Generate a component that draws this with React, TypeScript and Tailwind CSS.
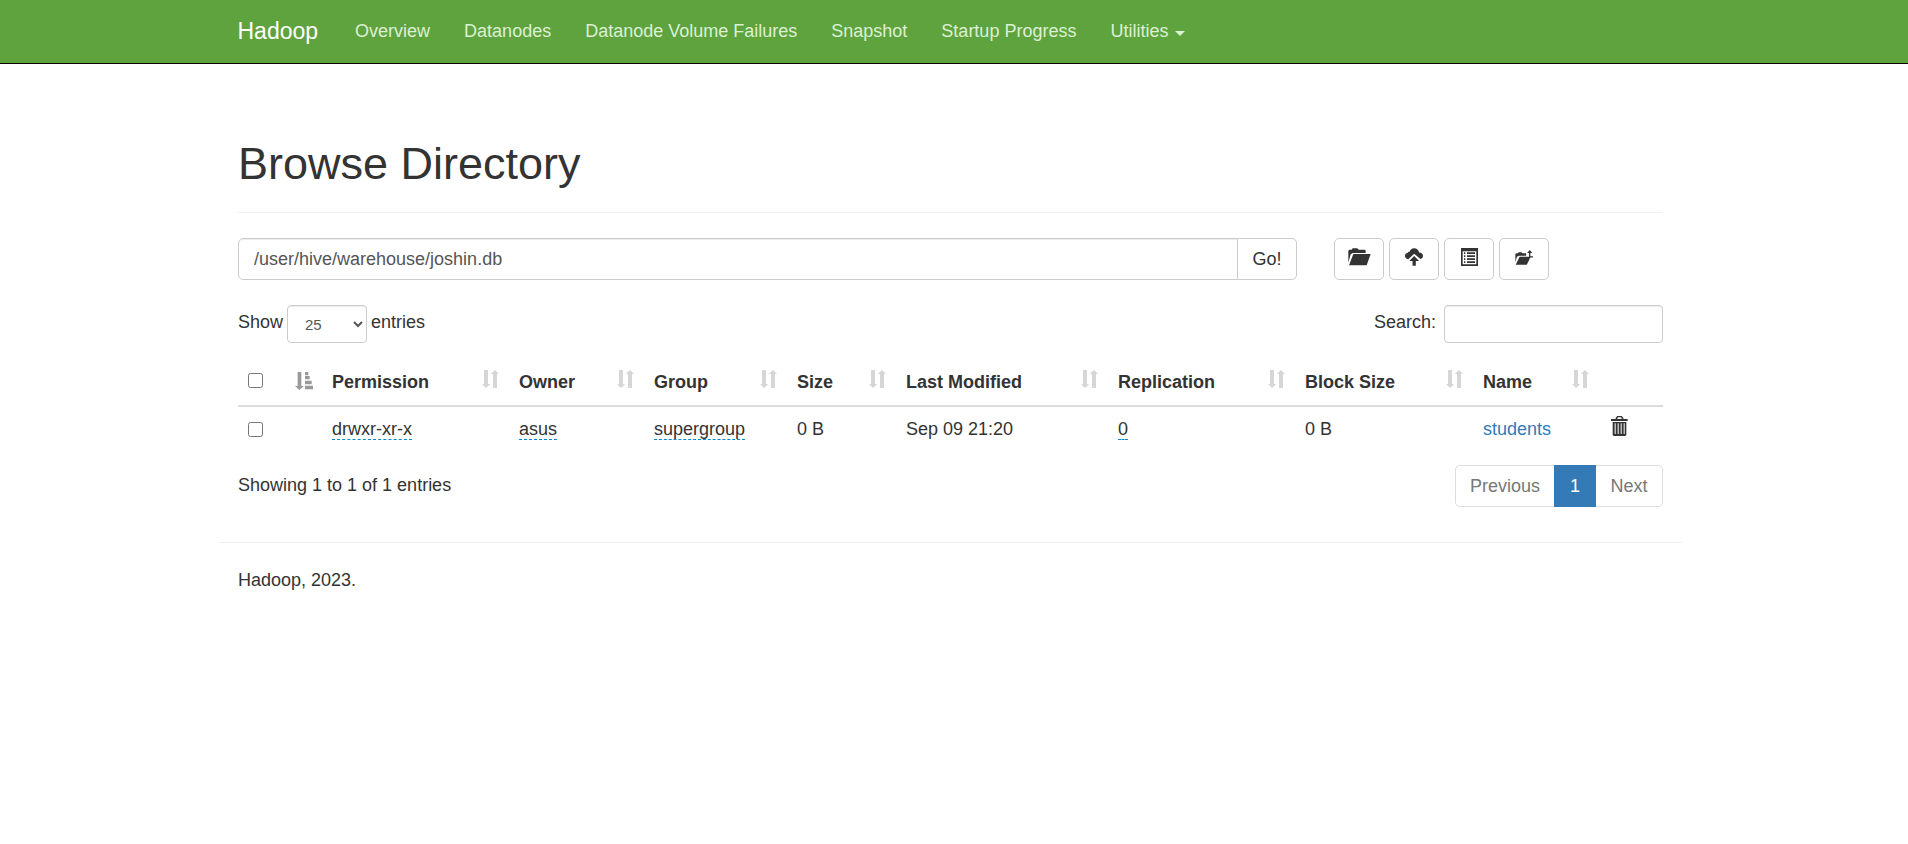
import React from "react";

const navItems = ["Overview", "Datanodes", "Datanode Volume Failures", "Snapshot", "Startup Progress"];

const columns = [
  { label: "Permission", width: "w-[187px]" },
  { label: "Owner", width: "w-[135px]" },
  { label: "Group", width: "w-[143px]" },
  { label: "Size", width: "w-[109px]" },
  { label: "Last Modified", width: "w-[212px]" },
  { label: "Replication", width: "w-[187px]" },
  { label: "Block Size", width: "w-[178px]" },
  { label: "Name", width: "w-[126px]" },
];

function SortIcon() {
  return (
    <svg viewBox="0 0 51 54" className="h-[18px] w-[17px] shrink-0 fill-[#d6d6d6]" aria-hidden="true">
      <path d="M6 0h12v42h7L12 54 0 42h6zM33 54h12V12h6L39 0 26 12h7z" />
    </svg>
  );
}

function SortedIcon() {
  return (
    <svg viewBox="0 0 54 54" className="h-[18px] w-[18px] shrink-0 fill-[#999999]" aria-hidden="true">
      <path d="M8 0h11v42h8L13 54 0 42h8zM30 0h10v10H30zM30 12h14v10H30zM30 26h20v11H30zM30 41h24v11H30z" />
    </svg>
  );
}

function FolderOpenIcon() {
  return (
    <svg viewBox="0 0 69 54" className="h-[18px] w-[23px] fill-[#333333]" aria-hidden="true">
      <path d="M1 44V8l3-3h7l3-4h14l4 4h19l2 3v7H14L8 19z" />
      <path d="M16 18h52L56 52H3z" />
    </svg>
  );
}

function CloudUploadIcon() {
  return (
    <svg viewBox="0 0 55 54" className="h-[18px] w-[18px] fill-[#333333]" aria-hidden="true">
      <path d="M7 33C3 32 0 28 0 24c0-5 3-9 8-9 0-3 3-5 6-4C16 4 21 0 28 0c8 0 14 5 15 13 7 0 12 4 12 10 0 5-3 9-8 10L28 17 10 34z" />
      <path d="M28 24l15 15H33v15H23V39H13z" />
    </svg>
  );
}

function ListIcon() {
  return (
    <svg viewBox="0 0 51 54" className="h-[18px] w-[17px] fill-[#333333]" aria-hidden="true">
      <path fillRule="evenodd" d="M0 0h51v54H0zM5 10v39h41V10z" />
      <path d="M9 13h4v5H9zM18 13h24v5H18zM9 22h4v5H9zM18 22h24v5H18zM9 31h4v5H9zM18 31h24v5H18zM9 40h4v5H9zM18 40h24v5H18z" />
    </svg>
  );
}

function FolderMoveIcon() {
  return (
    <svg viewBox="0 0 55 46" className="h-[15px] w-[18px] fill-[#333333]" aria-hidden="true">
      <path d="M1 37V13l3-3h5l2-3h9l3 3h11v8H12l-6 3z" />
      <path d="M14 21h34L36 45H2z" />
      <path d="M45 0l8 9h-6v10h8v4H43V9h-6z" />
    </svg>
  );
}

function TrashIcon() {
  return (
    <svg viewBox="0 0 51 60" className="h-5 w-[17px] fill-[#333333]" aria-hidden="true">
      <path fillRule="evenodd" d="M14 9V5l5-5h13l5 5v4h13v6H0V9zM19 9h13V6l-2-2h-9l-2 2z" />
      <path fillRule="evenodd" d="M5 18h41v38l-3 4H8l-3-4zM11 22v32h3V22zM20 22v32h3V22zM29 22v32h3V22zM38 22v32h3V22z" />
    </svg>
  );
}

function ToolButton({ label, children }: { label: string; children: React.ReactNode }) {
  return (
    <button
      type="button"
      aria-label={label}
      className="flex h-[42px] w-[50px] items-center justify-center rounded-[5px] border border-[#cccccc] bg-white pb-1"
    >
      {children}
    </button>
  );
}

function Editable({ children }: { children: React.ReactNode }) {
  return (
    <a href="#edit" className="border-b border-dashed border-[#0088cc]">
      {children}
    </a>
  );
}

export default function App() {
  return (
    <div className="bg-white font-['Liberation_Sans',Arial,sans-serif] text-[18px] leading-[25px] text-[#333333]">
      <header className="border-b border-[#080808] bg-[#5fa33e] pr-2">
        <nav className="mx-auto flex h-[63px] max-w-[1463px] items-center gap-[34px] px-[19px] text-[#dcf0d3]">
          <a href="#home" className="mr-[3px] text-[23px] text-white">Hadoop</a>
          {navItems.map((item) => (
            <a key={item} href="#nav" className="whitespace-nowrap">{item}</a>
          ))}
          <button type="button" className="flex items-center gap-[7px]">
            Utilities
            <svg viewBox="0 0 10 5" className="mt-1 h-[5px] w-[10px] fill-current" aria-hidden="true">
              <path d="M0 0h10L5 5z" />
            </svg>
          </button>
        </nav>
      </header>

      <div className="pr-[7px]">
        <main className="mx-auto max-w-[1463px] px-[19px] pt-[75px]">
          <h1 className="border-b border-[#eeeeee] pb-[24px] text-[45px] leading-[49px]">Browse Directory</h1>

          <div className="mt-[25px] flex">
            <form className="flex flex-1" onSubmit={(e) => e.preventDefault()}>
              <input
                type="text"
                aria-label="Directory"
                defaultValue="/user/hive/warehouse/joshin.db"
                className="h-[42px] min-w-0 flex-1 rounded-l-[5px] border border-[#cccccc] px-[15px] text-[#555555] shadow-[inset_0_1px_1px_rgba(0,0,0,0.075)] outline-none"
              />
              <button type="submit" className="-ml-px h-[42px] w-[60px] rounded-r-[5px] border border-[#cccccc] bg-white">
                Go!
              </button>
            </form>
            <div className="ml-[37px] flex w-[329px] gap-[5px]">
              <ToolButton label="Create directory"><FolderOpenIcon /></ToolButton>
              <ToolButton label="Upload files"><CloudUploadIcon /></ToolButton>
              <ToolButton label="Cut and paste"><ListIcon /></ToolButton>
              <ToolButton label="Parent directory"><FolderMoveIcon /></ToolButton>
            </div>
          </div>

          <div className="mt-[25px] flex justify-between">
            <label className="flex gap-1">
              <span className="pt-[5px]">Show</span>
              <select
                defaultValue="25"
                className="h-[38px] w-20 rounded-[4px] border border-[#cccccc] bg-white px-[13px] text-[15px] text-[#555555] shadow-[inset_0_1px_1px_rgba(0,0,0,0.075)]"
              >
                <option>25</option>
                <option>50</option>
                <option>100</option>
              </select>
              <span className="pt-[5px]">entries</span>
            </label>
            <label className="flex gap-2">
              <span className="pt-[5px]">Search:</span>
              <input
                type="search"
                className="h-[38px] w-[219px] rounded-[4px] border border-[#cccccc] px-3 text-[15px] shadow-[inset_0_1px_1px_rgba(0,0,0,0.075)] outline-none"
              />
            </label>
          </div>

          <table className="mt-[17px] w-full table-fixed text-left">
            <thead>
              <tr className="border-b-2 border-[#dddddd]">
                <th className="w-[44px] px-[10px] pb-1">
                  <input type="checkbox" aria-label="Select all" className="block size-[15px]" />
                </th>
                <th className="w-[40px] pb-1">
                  <div className="flex justify-end pr-[9px]"><SortedIcon /></div>
                </th>
                {columns.map((c) => (
                  <th key={c.label} className={`${c.width} py-[10px] pr-[10px] pl-[10px] font-bold`}>
                    <div className="flex items-start justify-between whitespace-nowrap">
                      {c.label}
                      <SortIcon />
                    </div>
                  </th>
                ))}
                <th />
              </tr>
            </thead>
            <tbody>
              <tr>
                <td className="px-[10px]">
                  <input type="checkbox" aria-label="Select students" className="block size-[15px]" />
                </td>
                <td />
                <td className="p-[10px]"><Editable>drwxr-xr-x</Editable></td>
                <td className="p-[10px]"><Editable>asus</Editable></td>
                <td className="p-[10px]"><Editable>supergroup</Editable></td>
                <td className="p-[10px]">0 B</td>
                <td className="p-[10px]">Sep 09 21:20</td>
                <td className="p-[10px]"><Editable>0</Editable></td>
                <td className="p-[10px]">0 B</td>
                <td className="p-[10px]"><a href="#students" className="text-[#337ab7]">students</a></td>
                <td className="px-3 pb-[7px]">
                  <button type="button" aria-label="Delete students" className="block"><TrashIcon /></button>
                </td>
              </tr>
            </tbody>
          </table>

          <div className="mt-[13px] flex justify-between">
            <p className="pt-2">Showing 1 to 1 of 1 entries</p>
            <nav aria-label="Pages" className="flex h-[42px] text-[#777777]">
              <a href="#previous" className="flex w-[99px] items-center justify-center rounded-l-[5px] border border-r-0 border-[#dddddd]">Previous</a>
              <a href="#1" className="flex w-[42px] items-center justify-center bg-[#337ab7] text-white">1</a>
              <a href="#next" className="flex w-[67px] items-center justify-center rounded-r-[5px] border border-l-0 border-[#dddddd]">Next</a>
            </nav>
          </div>
        </main>

        <footer className="mx-auto mt-[35px] max-w-[1463px] border-t border-[#eeeeee] px-[19px] pt-[25px]">
          <p>Hadoop, 2023.</p>
        </footer>
      </div>
    </div>
  );
}
